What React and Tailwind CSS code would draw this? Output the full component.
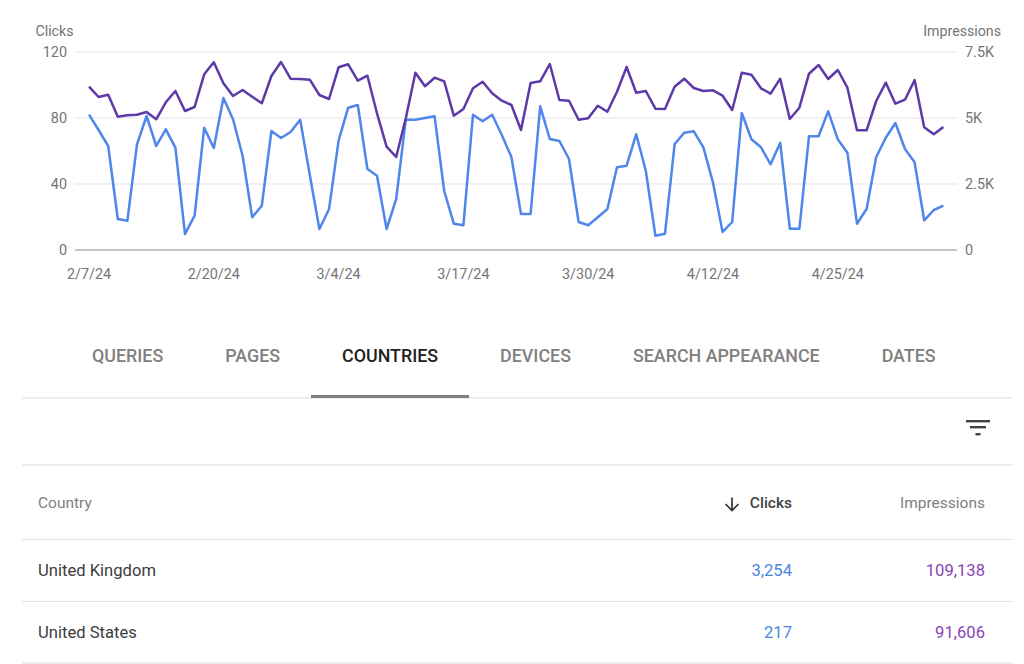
const purple = [230,261,254,320,316,314,306,328,277,243,303,291,193,157,220,258,240,260,280,198,156,206,207,209,255,267,172,163,212,197,310,410,441,325,188,229,203,214,317,297,235,215,250,272,285,360,219,214,162,270,272,329,325,287,305,245,171,248,243,296,297,230,206,234,243,241,257,300,188,194,235,251,206,327,293,191,165,207,180,233,361,361,273,218,281,269,210,352,373,351];
const blue = [314,360,408,627,632,403,318,408,358,413,672,617,353,414,264,328,437,622,587,363,384,366,329,495,657,598,392,293,285,477,497,657,567,329,329,324,319,543,641,646,314,334,314,375,441,612,612,289,387,393,447,636,646,622,597,472,467,373,482,677,671,403,368,364,412,518,666,636,309,388,412,463,398,656,656,379,379,304,388,428,641,597,441,383,339,417,457,631,600,587];
const pts = (a) => a.map((y, i) => `${(89 + i * 9.6).toFixed(1)},${(10 + y / 3).toFixed(1)}`).join(" ");
const grid = [
  { y: 52, l: "120", r: "7.5K" },
  { y: 118, l: "80", r: "5K" },
  { y: 184, l: "40", r: "2.5K" },
];
const dates = ["2/7/24", "2/20/24", "3/4/24", "3/17/24", "3/30/24", "4/12/24", "4/25/24"];
const tabs = ["QUERIES", "PAGES", "COUNTRIES", "DEVICES", "SEARCH APPEARANCE", "DATES"];
const rows = [
  { c: "United Kingdom", k: "3,254", i: "109,138", b: "border-b border-[#e2e2e2]" },
  { c: "United States", k: "217", i: "91,606", b: "border-b-2 border-[#eeeeee]" },
];

function Chart() {
  return (
    <svg width="1024" height="300" viewBox="0 0 1024 300" className="block" fontSize="14.4" fill="#757575">
      <text x="54.5" y="36" textAnchor="middle" fontSize="14.2">Clicks</text>
      <text x="1001" y="36" textAnchor="end" fontSize="14.2">Impressions</text>
      {grid.map((g) => (
        <g key={g.y}>
          <line x1="75" x2="957" y1={g.y} y2={g.y} stroke="#eeeeee" strokeWidth="1.4" />
          <text x="67" y={g.y + 5} textAnchor="end">{g.l}</text>
          <text x="965" y={g.y + 5}>{g.r}</text>
        </g>
      ))}
      <line x1="75" x2="957" y1="250" y2="250" stroke="#b0b0b0" strokeWidth="1.4" />
      <text x="67" y="255" textAnchor="end">0</text>
      <text x="965" y="255">0</text>
      {dates.map((d, i) => (
        <text key={d} x={89 + i * 124.8} y="279" textAnchor="middle">{d}</text>
      ))}
      <polyline points={pts(blue)} fill="none" stroke="#4f86ec" strokeWidth="2.5" strokeLinejoin="round" />
      <polyline points={pts(purple)} fill="none" stroke="#5e3aa8" strokeWidth="2.5" strokeLinejoin="round" />
    </svg>
  );
}

export default function App() {
  return (
    <div className="w-[1024px] h-[664px] overflow-hidden bg-white font-['Roboto',sans-serif]">
      <Chart />
      <div className="w-[991px] ml-[22px]">
        <div className="mt-[32px] flex h-[67px] pl-[39px] border-b-2 border-[#eeeeee]">
          {tabs.map((t) => {
            const active = t === "COUNTRIES";
            return (
              <div
                key={t}
                className={`relative flex items-start pt-[14px] px-[31px] text-[17.85px] leading-[20px] font-medium ${active ? "text-[#212121]" : "text-[#808080]"}`}
              >
                {t}
                {active && <div className="absolute left-0 right-0 bottom-[-1px] h-[3px] bg-[#808080]" />}
              </div>
            );
          })}
        </div>
        <div className="flex h-[67px] items-center justify-end border-b-2 border-[#eeeeee] pr-[23px] pb-[8px]">
          <svg width="24" height="16" viewBox="0 0 24 16">
            <rect x="0" y="0" width="24" height="2.4" fill="#424242" />
            <rect x="4" y="6" width="16" height="2.4" fill="#424242" />
            <rect x="9.5" y="13" width="5" height="2.4" fill="#424242" />
          </svg>
        </div>
        <div className="flex h-[74px] items-center border-b border-[#e2e2e2] pt-[3px] pl-[16px] pr-[28px] text-[15.5px]">
          <div className="flex-1 text-[#808080]">Country</div>
          <div className="flex items-center justify-end w-[100px] font-medium text-[#424242]">
            <svg width="16" height="16" viewBox="0 0 16 16" className="mr-[10px]" fill="none" stroke="#333333" strokeWidth="1.7">
              <path d="M8 1.5v12.5M1.5 8 8 14.5 14.5 8" />
            </svg>
            Clicks
          </div>
          <div className="w-[193px] text-right text-[#808080]">Impressions</div>
        </div>
        {rows.map((r) => (
          <div key={r.c} className={`flex h-[62px] items-center pt-[2px] pl-[16px] pr-[28px] text-[16.6px] ${r.b}`}>
            <div className="flex-1 text-[#3c3c3c]">{r.c}</div>
            <div className="w-[100px] text-right text-[#4a86e0]">{r.k}</div>
            <div className="w-[193px] text-right text-[#8a44b4]">{r.i}</div>
          </div>
        ))}
      </div>
    </div>
  );
}
